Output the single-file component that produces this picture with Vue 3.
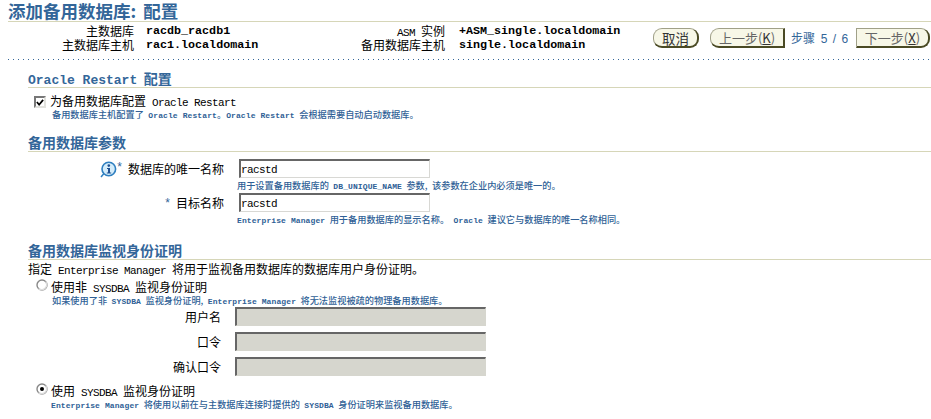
<script setup>
const info = [
  [['主数据库'], 'racdb_racdb1', [['l', 'ASM'], ' 实例'], '+ASM_single.localdomain'],
  [['主数据库主机'], 'rac1.localdomain', ['备用数据库主机'], 'single.localdomain'],
]
</script>

<template>
  <div class="page">
    <h1 class="title">添加备用数据库: 配置</h1>
    <div class="head">
      <div class="info">
        <template v-for="(r, i) in info" :key="i">
          <div class="k">
            <template v-for="(p, j) in r[0]" :key="j">{{ p }}</template>
          </div>
          <div class="v">{{ r[1] }}</div>
          <div class="k">
            <template v-for="(p, j) in r[2]" :key="j">
              <span v-if="Array.isArray(p)" class="l">{{ p[1] }}</span>
              <template v-else>{{ p }}</template>
            </template>
          </div>
          <div class="v v2">{{ r[3] }}</div>
        </template>
      </div>
      <div class="actions">
        <button class="btn round cancel">取消</button>
        <button class="btn left prev">上一步(<u>K</u>)</button>
        <span class="step">步骤 <span class="n">5 / 6</span></span>
        <button class="btn right next">下一步(<u>X</u>)</button>
      </div>
    </div>
    <div class="dots"></div>

    <section class="main">
      <h2 class="sec first"><span class="ol">Oracle Restart</span> 配置</h2>
      <div class="check-row">
        <span class="cb">
          <svg width="9" height="9" viewBox="0 0 9 9"><path d="M1 4 L3.5 7 L8 1.5" fill="none" stroke="#000" stroke-width="2"/></svg>
        </span>
        <span class="txt">为备用数据库配置 <span class="l">Oracle Restart</span></span>
      </div>
      <div class="hint h-check">备用数据库主机配置了 <span class="hl">Oracle Restart</span>。<span class="hl">Oracle Restart</span> 会根据需要自动启动数据库。</div>

      <h2 class="sec">备用数据库参数</h2>
      <div class="form top-form">
        <div class="lab">
          <svg class="info-ic" width="17" height="17" viewBox="0 0 17 17">
            <path d="M1 16 L4 12.5" stroke="#2f7fc0" stroke-width="1.5"/>
            <circle cx="8.8" cy="8" r="6.8" fill="#d4ecfa" stroke="#2f7fc0" stroke-width="1.6"/>
            <circle cx="8.8" cy="4.6" r="1.3" fill="#1d4f91"/>
            <path d="M7 7 H10 V11.6 H11.2 V12.6 H6.8 V11.6 H8 V8 H7 Z" fill="#1d4f91"/>
          </svg>
          <span class="star">*</span><span>数据库的唯一名称</span>
        </div>
        <input class="inp" value="racstd" />
        <div></div>
        <div class="hint fh">用于设置备用数据库的 <span class="hl">DB_UNIQUE_NAME</span> 参数, 该参数在企业内必须是唯一的。</div>
        <div class="lab"><span class="star star2">*</span><span>目标名称</span></div>
        <input class="inp" value="racstd" />
        <div></div>
        <div class="hint fh"><span class="hl">Enterprise Manager</span> 用于备用数据库的显示名称。 <span class="hl">Oracle</span> 建议它与数据库的唯一名称相同。</div>
      </div>

      <h2 class="sec third">备用数据库监视身份证明</h2>
      <div class="txt desc">指定 <span class="l">Enterprise Manager</span> 将用于监视备用数据库的数据库用户身份证明。</div>
      <div class="radio-row r1">
        <svg class="rd" width="12" height="12" viewBox="0 0 12 12">
          <circle cx="6" cy="6" r="5" fill="#fff" stroke="#888" stroke-width="1.4"/>
          <path d="M9.6 2.6 A5 5 0 0 1 2.6 9.6" fill="none" stroke="#ddd" stroke-width="1.4"/>
        </svg>
        <span class="txt">使用非 <span class="l">SYSDBA</span> 监视身份证明</span>
      </div>
      <div class="hint h-check">如果使用了非 <span class="hl">SYSDBA</span> 监视身份证明, <span class="hl">Enterprise Manager</span> 将无法监视被疏的物理备用数据库。</div>
      <div class="form cred">
        <div class="lab">用户名</div>
        <input class="inp off" disabled />
        <div class="lab">口令</div>
        <input class="inp off" disabled />
        <div class="lab">确认口令</div>
        <input class="inp off" disabled />
      </div>
      <div class="radio-row r2">
        <svg class="rd" width="12" height="12" viewBox="0 0 12 12">
          <circle cx="6" cy="6" r="5" fill="#fff" stroke="#888" stroke-width="1.4"/>
          <path d="M9.6 2.6 A5 5 0 0 1 2.6 9.6" fill="none" stroke="#ddd" stroke-width="1.4"/>
          <circle cx="6" cy="6" r="2" fill="#000"/>
        </svg>
        <span class="txt">使用 <span class="l">SYSDBA</span> 监视身份证明</span>
      </div>
      <div class="hint h-check h-last"><span class="hl">Enterprise Manager</span> 将使用以前在与主数据库连接时提供的 <span class="hl">SYSDBA</span> 身份证明来监视备用数据库。</div>
    </section>
  </div>
</template>

<style>
html, body { margin: 0; background: #fff; overflow: hidden; }
</style>

<style scoped>
.page {
  width: 931px;
  height: 419px;
  overflow: hidden;
  font-family: "Noto Sans CJK SC", "Liberation Sans", sans-serif;
  font-size: 12px;
  color: #000;
  background: #fff;
  word-spacing: 3.3px;
}
.l { font-family: "Liberation Mono", monospace; font-size: 11px; letter-spacing: -0.6px; word-spacing: 0; }
.title {
  margin: 0 0 0 8px;
  height: 22px;
  box-sizing: border-box;
  line-height: 21px;
  font-size: 17.5px;
  font-weight: 700;
  color: #336699;
  border-bottom: 1px solid #d6d6b8;
  word-spacing: 3px;
  white-space: nowrap;
}
.head { display: flex; height: 37px; }
.info {
  margin: 2px 0 0 8px;
  width: 645px;
  display: grid;
  grid-template-columns: 126px 166px 145px 208px;
  grid-auto-rows: 14px;
  line-height: 14px;
}
.k { text-align: right; white-space: nowrap; }
.v {
  padding-left: 12px;
  font-family: "Liberation Mono", monospace;
  font-weight: 700;
  font-size: 11.7px;
  white-space: nowrap;
  word-spacing: 0;
}
.v2 { padding-left: 14px; }
.actions { display: flex; align-items: flex-start; padding-top: 6px; }
.btn {
  height: 20px;
  box-sizing: border-box;
  padding: 0;
  background: #f7f7e7;
  border: 1px solid #a0a088;
  border-bottom: 2px solid #4a4a24;
  border-right: 2px solid #4a4a24;
  font-family: "Noto Sans CJK SC", "Liberation Sans", sans-serif;
  font-size: 13.5px;
  line-height: 16px;
  color: #333;
  white-space: nowrap;
}
.round { border-radius: 9px; }
.left { border-radius: 9px 0 0 9px; }
.right { border-radius: 0 9px 9px 0; }
.cancel { width: 46px; }
.prev { width: 75px; margin-left: 11px; color: #666; font-size: 13px; }
.next { width: 74px; color: #666; font-size: 13px; }
.prev u, .next u { color: #333; }
.step { width: 71px; box-sizing: border-box; padding: 2px 0 0 6px; color: #336699; line-height: 16px; white-space: nowrap; word-spacing: 0; }
.n { font-family: "Liberation Sans", sans-serif; font-size: 12px; margin-left: 3px; word-spacing: 2px; }
.dots {
  height: 1px;
  margin-left: 8px;
  background-image: repeating-linear-gradient(90deg, #336699 0 1px, transparent 1px 5px);
}
.main { margin-left: 28px; }
.sec {
  margin: 17px 0 0;
  height: 16px;
  box-sizing: border-box;
  line-height: 13px;
  font-size: 14px;
  font-weight: 700;
  color: #336699;
  border-bottom: 1px solid #d6d6b8;
  white-space: nowrap;
}
.sec.first { margin-top: 12px; }
.ol { font-family: "Liberation Mono", monospace; font-size: 13px; word-spacing: 0; }
.check-row { display: flex; align-items: center; height: 16px; margin: 6px 0 0 6px; gap: 4px; }
.cb {
  width: 12px;
  height: 12px;
  box-sizing: border-box;
  display: flex;
  align-items: center;
  justify-content: center;
  background: #fff;
  border: 2px solid #e2e2de;
  border-top-color: #777;
  border-left-color: #777;
}
.txt { line-height: 16px; white-space: nowrap; }
.hint {
  height: 10px;
  font-size: 9.2px;
  font-weight: 500;
  line-height: 10px;
  color: #2f5f96;
  white-space: nowrap;
  word-spacing: 2.4px;
}
.hl { font-family: "Liberation Mono", monospace; font-size: 8px; letter-spacing: 0.1px; font-weight: 700; word-spacing: 0; }
.h-check { margin: -1px 0 0 24px; }
.form { display: grid; align-items: center; }
.top-form { margin-top: 7px; grid-template-columns: 196px 191px; column-gap: 15px; grid-auto-rows: auto; }
.lab { display: flex; justify-content: flex-end; align-items: center; height: 19px; line-height: 19px; }
.star { color: #336699; font-family: "Liberation Sans", sans-serif; margin-right: 6px; align-self: flex-start; line-height: 17px; }
.star2 { line-height: 21px; }
.info-ic { margin-top: 1px; }
.inp {
  box-sizing: border-box;
  width: 100%;
  height: 19px;
  margin: 0;
  padding: 1px 1px 0 0;
  background: #fff;
  border: 2px solid #d8d8d4;
  border-top-color: #666;
  border-left-color: #666;
  border-right-width: 1px;
  border-bottom-width: 1px;
  font-family: "Liberation Mono", monospace;
  font-size: 11px;
  letter-spacing: -0.6px;
  outline: none;
}
.fh { grid-column: 2; margin-left: -2px; height: 15px; line-height: 15px; }
.third { margin-top: 17px; }
.desc { margin-top: 1px; height: 16px; }
.radio-row { display: flex; align-items: center; height: 16px; margin-left: 8px; gap: 3px; }
.rd { margin-top: -6px; }
.r1 { margin-top: 3px; }
.r2 { margin-top: 8px; }
.cred { margin-top: 2px; grid-template-columns: 193px 251px; column-gap: 14px; row-gap: 6px; }
.off { background: #d6d6ce; border-color: #d6d6ce; border-top-color: #666; border-left-color: #666; }
.h-last { margin-left: 23px; }
</style>
